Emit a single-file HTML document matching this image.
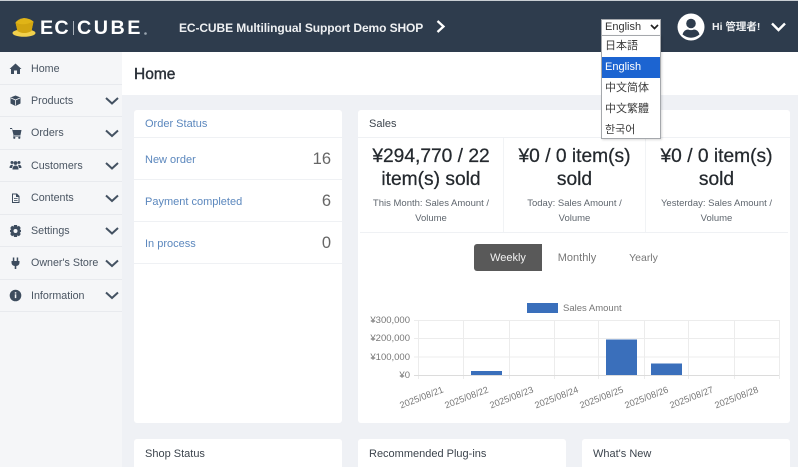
<!DOCTYPE html>
<html lang="en">
<head>
<meta charset="utf-8">
<title>EC-CUBE</title>
<style>
html,body{margin:0;padding:0;width:798px;height:467px;overflow:hidden;background:#eff1f5}
body{position:relative;font-family:"Liberation Sans","Noto Sans CJK JP",sans-serif;color:#3a4450}
div,span{position:absolute;white-space:nowrap;box-sizing:border-box}
svg{position:absolute;overflow:visible}
.hdr{left:0;top:0;width:798px;height:52px;background:#2e3c4d;border-top:1px solid #c9ced3}
.side{left:0;top:52px;width:122px;height:415px;background:#f5f6f8}
.sl{left:0;width:122px;height:1px;background:#e8eaee}
.st{left:31px;font-size:10.7px;line-height:14px;color:#4a5562}
.card{background:#fff;border-radius:3px}
.ln{height:1px;background:#eff1f4}
.big{font-size:19.2px;line-height:23px;color:#24292e;text-align:center;-webkit-text-stroke:.25px #24292e}
.sm{font-size:9.5px;line-height:16px;color:#5f666e;text-align:center}
.opt{left:1px;width:58px;height:21px;font-size:11px;line-height:20px;padding-left:3px;color:#3d3d3d}
.lnk{left:145px;font-size:11px;line-height:14px;color:#5b87bd}
.num{right:467px;font-size:16.5px;line-height:20px;color:#666;text-align:right}
.h{font-size:11px;line-height:14px;color:#3c444d}
.lg{top:17px;font-size:19px;line-height:23px;font-weight:bold;color:#fff;transform-origin:0 50%}
</style>
</head>
<body>
<div class="hdr"></div>

<!-- logo -->
<svg style="left:0;top:0" width="150" height="52" viewBox="0 0 150 52">
<ellipse cx="24" cy="33" rx="11.500" ry="3.800" fill="#f2d14c"/>
<path d="M15.500 22.500 Q18 19 24 18 Q30 18.500 33.500 21.500 L31.500 31 Q24 35 17.500 31 Z" fill="#e0b417"/>
<path d="M15.500 22.500 Q23 26.500 33.500 21.500 L31.500 31 Q24 35 17.500 31 Z" fill="#d2a510"/>
<rect x="73" y="21" width="1" height="14" fill="#aab2ba"/>
<circle cx="145.500" cy="33.500" r="1.300" fill="#9aa5b0"/>
</svg>
<div class="lg" style="left:40px;letter-spacing:1.200px;transform:scaleX(1.040)">EC</div>
<div class="lg" style="left:77px;letter-spacing:2.400px;transform:scaleX(1.040)">CUBE</div>

<div style="left:179px;top:20px;font-size:12px;line-height:16px;font-weight:bold;color:#eef0f2;letter-spacing:-.1px">EC-CUBE Multilingual Support Demo SHOP</div>
<svg style="left:436px;top:20px" width="10" height="13" viewBox="0 0 10 13"><path d="M1.500 1 L7.500 6.500 L1.500 12" fill="none" stroke="#fff" stroke-width="2.300"/></svg>

<!-- avatar + user -->
<svg style="left:677px;top:13px" width="28" height="28" viewBox="0 0 28 28">
<circle cx="14" cy="14" r="13.500" fill="#fff"/>
<circle cx="14" cy="10.500" r="4.800" fill="#2e3c4d"/>
<path d="M5.500 21.500 Q7 16.500 11 16.500 Q14 17.800 17 16.500 Q21 16.500 22.500 21.500 Q14 28 5.500 21.500Z" fill="#2e3c4d"/>
</svg>
<div style="left:712px;top:20px;font-size:10.500px;line-height:14px;font-weight:bold;color:#eef0f2">Hi 管理者!</div>
<svg style="left:771px;top:22px" width="15" height="10" viewBox="0 0 15 10"><path d="M1 1.500 L7.500 8 L14 1.500" fill="none" stroke="#fff" stroke-width="2.400"/></svg>

<!-- sidebar -->
<div class="side"></div>
<div class="sl" style="top:84px"></div><div class="sl" style="top:116px"></div><div class="sl" style="top:149px"></div><div class="sl" style="top:181px"></div><div class="sl" style="top:214px"></div><div class="sl" style="top:246px"></div><div class="sl" style="top:279px"></div><div class="sl" style="top:311px"></div>
<div class="st" style="top:62px">Home</div>
<div class="st" style="top:94px">Products</div>
<div class="st" style="top:126px">Orders</div>
<div class="st" style="top:159px">Customers</div>
<div class="st" style="top:191px">Contents</div>
<div class="st" style="top:224px">Settings</div>
<div class="st" style="top:256px">Owner's Store</div>
<div class="st" style="top:289px">Information</div>
<svg style="left:0;top:52px" width="122" height="260" viewBox="0 52 122 260" fill="#3d4c5e">
<!-- home -->
<path d="M9.500 69 L15.500 63.500 L21.500 69 L20 69 L20 74 L17 74 L17 70.500 L14 70.500 L14 74 L11 74 L11 69Z"/>
<!-- box -->
<path d="M15.500 95.500 L20.500 97.500 L20.500 103.500 L15.500 106 L10.500 103.500 L10.500 97.500Z"/>
<path d="M11 98 L15.500 100 L20 98 M15.500 100 L15.500 105.500" stroke="#f5f6f8" stroke-width=".8" fill="none"/>
<!-- cart -->
<path d="M10 128 L12 128 L12.600 130 L21.500 130 L20.500 135 L13.500 135 L12 129 L10 129Z"/><rect x="13" y="135.500" width="7.500" height="1"/><circle cx="14.300" cy="137.800" r="1.100"/><circle cx="19.300" cy="137.800" r="1.100"/>
<!-- users -->
<circle cx="12" cy="162.500" r="1.500"/><circle cx="19" cy="162.500" r="1.500"/><circle cx="15.500" cy="163" r="1.900"/>
<path d="M9.500 168 Q9.500 164.700 12 164.700 L13 164.900 L12 168Z M21.500 168 Q21.500 164.700 19 164.700 L18 164.900 L19 168Z M12.500 169.500 Q12.500 165.500 15.500 165.500 Q18.500 165.500 18.500 169.500Z"/>
<!-- file -->
<path d="M12 193.500 L17 193.500 L19.500 196 L19.500 203 L12 203Z M13 194.500 L13 202 L18.500 202 L18.500 197 L16 197 L16 194.500Z" fill-rule="evenodd"/>
<rect x="14" y="198" width="3.600" height=".8"/><rect x="14" y="200" width="3.600" height=".8"/>
<!-- cog -->
<path fill-rule="evenodd" d="M14 225 H17 L17.400 226.600 L19 225.800 L20.800 228 L19.800 229.300 L21 230.200 V231.800 L19.800 232.700 L20.800 234 L19 236.200 L17.400 235.400 L17 237 H14 L13.600 235.400 L12 236.200 L10.200 234 L11.200 232.700 L10 231.800 V230.200 L11.200 229.300 L10.200 228 L12 225.800 L13.600 226.600Z M15.500 229 A2 2 0 1 0 15.510 233 A2 2 0 1 0 15.500 229Z"/>
<!-- plug -->
<path d="M12.800 257.500 H14.300 V261 H16.700 V257.500 H18.200 V261 H19.500 V262.500 Q19.500 265.500 16.300 266 V269 H14.700 V266 Q11.500 265.500 11.500 262.500 V261 H12.800Z"/>
<!-- info -->
<circle cx="15.500" cy="295.500" r="5.800"/>
<rect x="14.800" y="294.300" width="1.500" height="3.800" fill="#f5f6f8"/><rect x="14.800" y="292.200" width="1.500" height="1.400" fill="#f5f6f8"/>
</svg>
<svg style="left:105px;top:95px" width="14" height="210" viewBox="0 0 14 210" fill="none" stroke="#445262" stroke-width="2">
<path d="M1 3 L7 8.500 L13 3"/><path d="M1 35.500 L7 41 L13 35.500"/><path d="M1 68 L7 73.500 L13 68"/><path d="M1 100.500 L7 106 L13 100.500"/><path d="M1 133 L7 138.500 L13 133"/><path d="M1 165.500 L7 171 L13 165.500"/><path d="M1 197.500 L7 203 L13 197.500"/>
</svg>

<!-- title bar -->
<div style="left:122px;top:52px;width:676px;height:43px;background:#fff"></div>
<div style="left:134px;top:64.500px;font-size:15.500px;line-height:20px;color:#2a3038;-webkit-text-stroke:.4px #2a3038">Home</div>

<!-- order status -->
<div class="card" style="left:134px;top:110px;width:208px;height:313px"></div>
<div class="ln" style="left:134px;top:137px;width:208px"></div>
<div class="ln" style="left:134px;top:179px;width:208px"></div>
<div class="ln" style="left:134px;top:221px;width:208px"></div>
<div class="ln" style="left:134px;top:263px;width:208px"></div>
<div class="lnk" style="top:117px">Order Status</div>
<div class="lnk" style="top:153px">New order</div>
<div class="lnk" style="top:195px">Payment completed</div>
<div class="lnk" style="top:237px">In process</div>
<div class="num" style="top:149px">16</div>
<div class="num" style="top:191px">6</div>
<div class="num" style="top:233px">0</div>

<!-- sales -->
<div class="card" style="left:358px;top:110px;width:432px;height:313px"></div>
<div class="ln" style="left:358px;top:137px;width:432px"></div>
<div class="h" style="left:369px;top:117px">Sales</div>
<div class="ln" style="left:360px;top:232px;width:428px"></div>
<div style="left:503px;top:138px;width:1px;height:94px;background:#f1f3f5"></div>
<div style="left:645px;top:138px;width:1px;height:94px;background:#f1f3f5"></div>

<div class="big" style="left:361px;top:145px;width:140px">¥294,770 / 22</div>
<div class="big" style="left:361px;top:168px;width:140px">item(s) sold</div>
<div class="sm" style="left:361px;top:195px;width:140px;padding-top:.5px">This Month: Sales Amount /</div>
<div class="sm" style="left:361px;top:211px;width:140px">Volume</div>

<div class="big" style="left:504px;top:145px;width:141px">¥0 / 0 item(s)</div>
<div class="big" style="left:504px;top:168px;width:141px">sold</div>
<div class="sm" style="left:504px;top:195px;width:141px;padding-top:.5px">Today: Sales Amount /</div>
<div class="sm" style="left:504px;top:211px;width:141px">Volume</div>

<div class="big" style="left:646px;top:145px;width:141px">¥0 / 0 item(s)</div>
<div class="big" style="left:646px;top:168px;width:141px">sold</div>
<div class="sm" style="left:646px;top:195px;width:141px;padding-top:.5px">Yesterday: Sales Amount /</div>
<div class="sm" style="left:646px;top:211px;width:141px">Volume</div>

<div style="left:474px;top:244px;width:68px;height:27px;background:#595959;border-radius:3px 0 0 3px;color:#f2f2f2;font-size:11px;line-height:28px;text-align:center">Weekly</div>
<div style="left:542px;top:244px;width:70px;height:27px;color:#777;font-size:11px;line-height:28px;text-align:center">Monthly</div>
<div style="left:612px;top:244px;width:63px;height:27px;color:#777;font-size:10.500px;line-height:28px;text-align:center">Yearly</div>

<!-- chart -->
<svg style="left:0;top:0" width="798" height="467" viewBox="0 0 798 467">
<g stroke="#ececec" stroke-width="1" fill="none">
<path d="M414 320.500H779M414 338.500H779M414 357H779"/>
<path d="M418.500 320V379M463.500 320V379M509.500 320V379M554.500 320V379M598.500 320V379M644.500 320V379M688.500 320V379M734.500 320V379M779.500 320V379"/>
</g>
<path d="M414 375.500H779" stroke="#dcdcdc"/>
<rect x="471" y="371" width="31" height="4" fill="#3a6fbb"/>
<rect x="606" y="339.500" width="31" height="35.500" fill="#3a6fbb"/>
<rect x="651" y="363.500" width="31" height="11.500" fill="#3a6fbb"/>
<rect x="527" y="303" width="31" height="10" fill="#3a6fbb"/>
<g font-family="Liberation Sans, sans-serif" font-size="9.500px" fill="#777">
<text x="563" y="311">Sales Amount</text>
<g text-anchor="end">
<text x="410" y="323">¥300,000</text>
<text x="410" y="341">¥200,000</text>
<text x="410" y="360">¥100,000</text>
<text x="410" y="378">¥0</text>
</g>
<g text-anchor="end" font-size="9.200px">
<text transform="translate(444,392) rotate(-21)">2025/08/21</text>
<text transform="translate(489,392) rotate(-21)">2025/08/22</text>
<text transform="translate(534,392) rotate(-21)">2025/08/23</text>
<text transform="translate(579,392) rotate(-21)">2025/08/24</text>
<text transform="translate(624,392) rotate(-21)">2025/08/25</text>
<text transform="translate(669,392) rotate(-21)">2025/08/26</text>
<text transform="translate(714,392) rotate(-21)">2025/08/27</text>
<text transform="translate(759,392) rotate(-21)">2025/08/28</text>
</g>
</g>
</svg>

<!-- bottom cards -->
<div class="card" style="left:134px;top:439px;width:208px;height:40px"></div>
<div class="card" style="left:358px;top:439px;width:208px;height:40px"></div>
<div class="card" style="left:582px;top:439px;width:208px;height:40px"></div>
<div class="h" style="left:145px;top:447px">Shop Status</div>
<div class="h" style="left:369px;top:447px">Recommended Plug-ins</div>
<div class="h" style="left:593px;top:447px">What's New</div>

<!-- select -->
<div style="left:601px;top:19px;width:60px;height:17px;background:#fff;border:1px solid #a5a8ac;font-size:11px;line-height:15px;padding-left:3px;color:#333">English</div>
<svg style="left:650px;top:24px" width="9" height="6" viewBox="0 0 9 6"><path d="M1 1 L4.500 4.500 L8 1" fill="none" stroke="#222" stroke-width="1.700"/></svg>
<div style="left:601px;top:35px;width:60px;height:104px;background:#fff;border:1px solid #a5a8ac;box-shadow:1px 1px 2px rgba(0,0,0,.15)">
<div class="opt" style="top:0;left:0;width:58px">日本語</div>
<div class="opt" style="top:20.500px;left:0;width:58px;background:#1c64d1;color:#fff">English</div>
<div class="opt" style="top:42px;left:0;width:58px;font-family:'Liberation Sans','Noto Sans CJK SC',sans-serif">中文简体</div>
<div class="opt" style="top:63px;left:0;width:58px;font-family:'Liberation Sans','Noto Sans CJK TC',sans-serif">中文繁體</div>
<div class="opt" style="top:83.500px;left:0;width:58px;font-family:'Liberation Sans','Noto Sans CJK KR',sans-serif">한국어</div>
</div>
</body>
</html>
